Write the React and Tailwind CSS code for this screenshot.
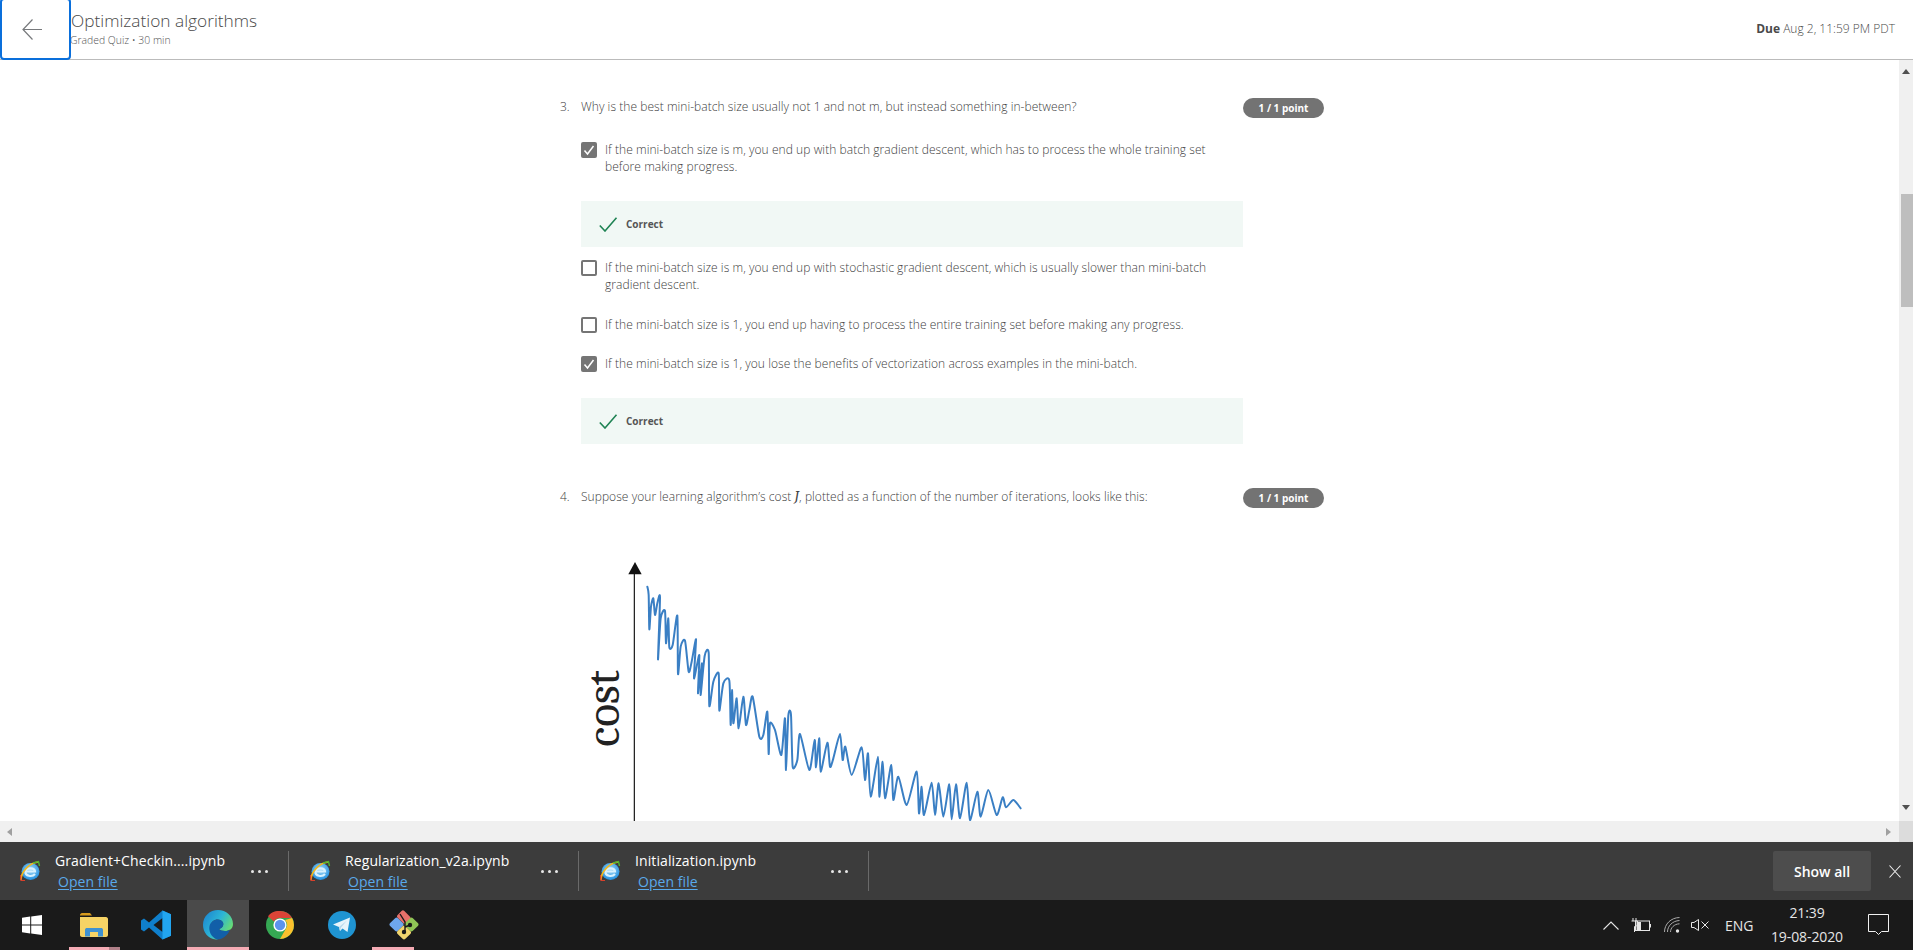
import React from "react";

const pts = "232,110 236,135 238,238 243,170 250,145 255,195 262,160 270,142 264,328 272,205 285,183 288,280 295,205 298,292 308,285 322,197 324,372 332,290 345,272 356,365 365,335 378,268 372,385 388,315 384,430 396,340 392,435 404,318 416,308 418,468 430,395 446,370 448,482 460,400 478,392 482,525 486,420 490,520 500,445 506,535 520,440 528,525 538,480 548,440 568,560 580,555 592,485 596,612 600,520 615,540 634,615 645,505 648,660 655,497 663,495 668,650 682,630 690,552 718,660 734,570 738,652 748,565 752,665 772,578 780,650 790,625 810,552 818,630 826,590 845,675 875,592 885,690 894,610 902,740 924,620 928,740 938,635 945,745 964,645 970,750 985,680 1010,765 1040,665 1047,790 1055,710 1062,795 1085,698 1095,795 1106,700 1120,800 1138,703 1145,808 1158,703 1170,805 1190,698 1200,810 1222,725 1232,800 1255,720 1280,795 1298,742 1308,772 1330,750 1352,775"
  .split(" ")
  .map((p) => p.split(",").map(Number));

function smooth(points) {
  let d = `M${points[0][0]} ${points[0][1]}`;
  const k = 0.12;
  for (let i = 0; i < points.length - 1; i++) {
    const p0 = points[Math.max(i - 1, 0)];
    const p1 = points[i];
    const p2 = points[i + 1];
    const p3 = points[Math.min(i + 2, points.length - 1)];
    d += ` C${p1[0] + (p2[0] - p0[0]) * k} ${p1[1] + (p2[1] - p0[1]) * k} ${p2[0] - (p3[0] - p1[0]) * k} ${p2[1] - (p3[1] - p1[1]) * k} ${p2[0]} ${p2[1]}`;
  }
  return d;
}
const curve = smooth(pts);

function Checkbox({ checked }) {
  if (checked) {
    return (
      <span className="flex h-[16px] w-[16px] shrink-0 items-center justify-center rounded-[2px] bg-[#757575]">
        <svg width="12" height="12" viewBox="0 0 12 12" fill="none">
          <path d="M1.5 6.5 L4.5 10 L10.5 2" stroke="#fff" strokeWidth="1.5" />
        </svg>
      </span>
    );
  }
  return <span className="h-[16px] w-[16px] shrink-0 rounded-[2px] border-2 border-[#757575] bg-white" />;
}

function Option({ checked, className, children }) {
  return (
    <div className={`flex w-[662px] gap-[8px] text-[12px] leading-[17px] ${className}`}>
      <Checkbox checked={checked} />
      <div className="-mt-[1px] pb-[1px] tracking-[0.06px] text-[#404040]">{children}</div>
    </div>
  );
}

function Correct({ className }) {
  return (
    <div className={`flex h-[46px] w-[662px] items-center bg-[#f1f8f5] pl-[18px] ${className}`}>
      <svg width="19" height="15" viewBox="0 0 19 15" fill="none">
        <path d="M0.8 8.5 L6 14 L17.5 0.8" stroke="#1f8354" strokeWidth="1.6" />
      </svg>
      <span className="ml-[8px] text-[10px] font-bold text-[#555]">Correct</span>
    </div>
  );
}

function Question({ n, className, children }) {
  return (
    <div className={`flex h-[20px] ${className}`}>
      <div className="w-[21px] text-[12px] leading-[17px] text-[#404040]">{n}</div>
      <div className="w-[662px] text-[12px] leading-[17px] tracking-[0.05px] text-[#404040]">{children}</div>
      <div className="flex h-[20px] w-[81px] items-center justify-center rounded-full bg-[#737373] text-[10px] font-bold text-white">
        1 / 1 point
      </div>
    </div>
  );
}

function IEIcon({ id }) {
  return (
    <svg width="22" height="22" viewBox="0 0 22 22" className="shrink-0">
      <defs>
        <radialGradient id={id} cx="50%" cy="40%" r="60%">
          <stop offset="0%" stopColor="#a8dcf7" />
          <stop offset="100%" stopColor="#1f8fe0" />
        </radialGradient>
      </defs>
      <ellipse cx="11.5" cy="11.5" rx="9" ry="8.5" fill={`url(#${id})`} />
      <path d="M6 11.5 H16 C16 7.5 7 7 6.5 11.5 C6 16 13 17.5 16 14" fill="none" stroke="#d9f1fd" strokeWidth="2.2" />
      <path d="M2 20 C2 12 10 3 19 2" fill="none" stroke="#f2b81f" strokeWidth="1.6" />
      <path d="M14 3 L19.5 1.5 L20.5 6" fill="none" stroke="#4fb12f" strokeWidth="1.4" />
      <path d="M1.5 15 L2 20.5 L6 20.5" fill="none" stroke="#d8402a" strokeWidth="1.2" />
    </svg>
  );
}

function Download({ name, id }) {
  return (
    <div className="flex h-[40px] w-[290px] shrink-0 items-center border-r border-[#6a6a6a]">
      <div className="ml-[20px]">
        <IEIcon id={id} />
      </div>
      <div className="ml-[14px] w-[196px] text-[14px] leading-[21px] text-white">
        <div className="tracking-[0.1px] whitespace-nowrap">{name}</div>
        <div className="ml-[3px] text-[#5aa9ea] underline underline-offset-2 tracking-[0.05px]">Open file</div>
      </div>
      <div className="flex gap-[4px]">
        <span className="h-[3px] w-[3px] rounded-full bg-[#e8e8e8]" />
        <span className="h-[3px] w-[3px] rounded-full bg-[#e8e8e8]" />
        <span className="h-[3px] w-[3px] rounded-full bg-[#e8e8e8]" />
      </div>
    </div>
  );
}

function TaskSlot({ active, bar, children }) {
  return (
    <div className={`relative flex h-[50px] w-[62px] shrink-0 items-center justify-center ${active ? "bg-[#4a4a4a]" : ""}`}>
      {children}
      {bar}
    </div>
  );
}

const pink = <span className="absolute bottom-0 left-0 h-[3px] w-full bg-[#f4abb4]" />;

export default function App() {
  return (
    <div className="flex h-[950px] w-[1913px] flex-col overflow-hidden bg-white text-[#4a4a4a] [font-family:'Open_Sans',sans-serif]">
      <header className="flex h-[60px] shrink-0 items-start border-b border-[#bbbbbb]">
        <div className="z-10 -mt-[2px] flex h-[62px] w-[71px] shrink-0 items-center justify-center rounded-[4px] border-2 border-[#0a6fdb] bg-white pr-[8px]">
          <svg width="20" height="21" viewBox="0 0 20 21" fill="none">
            <path d="M20 10.5 H1 M10.5 0.5 L1 10.5 L10.5 20.5" stroke="#77797c" strokeWidth="1.2" />
          </svg>
        </div>
        <div className="-ml-[1px] pt-[10px] font-light">
          <div className="pl-[1px] text-[17.3px] leading-[22px] text-[#4a4a4a]">Optimization algorithms</div>
          <div className="mt-[2px] text-[10.4px] leading-[12px] text-[#555]">Graded Quiz • 30 min</div>
        </div>
        <div className="ml-auto mr-[18px] pt-[21px] text-[12px] leading-[16px] font-light">
          <b className="font-bold">Due</b> Aug 2, 11:59 PM PDT
        </div>
      </header>

      <div className="flex h-[761px] shrink-0">
        <main className="h-full flex-1 overflow-hidden pl-[560px] pt-[38px] font-light">
          <Question n="3.">Why is the best mini-batch size usually not 1 and not m, but instead something in-between?</Question>
          <div className="ml-[21px]">
            <Option checked className="mt-[24px]">
              If the mini-batch size is m, you end up with batch gradient descent, which has to process the whole training set
              <br />
              before making progress.
            </Option>
            <Correct className="mt-[25px]" />
            <Option className="mt-[13px]">
              If the mini-batch size is m, you end up with stochastic gradient descent, which is usually slower than mini-batch
              <br />
              gradient descent.
            </Option>
            <Option className="mt-[23px]">
              If the mini-batch size is 1, you end up having to process the entire training set before making any progress.
            </Option>
            <Option checked className="mt-[22px]">
              If the mini-batch size is 1, you lose the benefits of vectorization across examples in the mini-batch.
            </Option>
            <Correct className="mt-[25px]" />
          </div>
          <Question n="4." className="mt-[44px]">
            Suppose your learning algorithm’s cost <i className="font-serif text-[15px] leading-[10px] font-normal italic">J</i>, plotted as a function of the number of iterations, looks like this:
          </Question>
          <svg width="470" height="280" viewBox="0 0 1410 840" className="ml-[10px] mt-[42px] block" fill="none">
            <path d="M193 70 V840" stroke="#111" strokeWidth="3.5" />
            <path d="M175 73 L195 36 L215 73 Z" fill="#111" />
            <text
              transform="translate(147 590) rotate(-90)"
              className="font-serif font-normal"
              fontSize="142"
              fill="#222"
            >
              cost
            </text>
            <path d={curve} stroke="#3a7fc4" strokeWidth="6" strokeLinejoin="round" strokeLinecap="round" />
          </svg>
        </main>
        <aside className="flex h-full w-[14px] shrink-0 flex-col items-end bg-[#f0f0f0]">
          <div className="flex h-[22px] w-full items-center justify-center">
            <span className="h-0 w-0 border-x-[4px] border-b-[5px] border-x-transparent border-b-[#505050]" />
          </div>
          <div className="mt-[112px] h-[113px] w-[12px] bg-[#bebebe]" />
          <div className="mt-auto flex h-[22px] w-full items-center justify-center pb-[6px]">
            <span className="h-0 w-0 border-x-[4px] border-t-[5px] border-x-transparent border-t-[#505050]" />
          </div>
        </aside>
      </div>

      <div className="flex h-[21px] shrink-0 items-center bg-[#f0f0f0]">
        <span className="ml-[7px] h-0 w-0 border-y-[4px] border-r-[5px] border-y-transparent border-r-[#a0a0a0]" />
        <span className="ml-auto mr-[8px] h-0 w-0 border-y-[4px] border-l-[5px] border-y-transparent border-l-[#a0a0a0]" />
        <span className="h-full w-[14px] bg-[#dcdcdc]" />
      </div>

      <div className="flex h-[58px] shrink-0 items-center bg-[#3c3c3c]">
        <div className="-ml-[1px] flex">
          <Download name="Gradient+Checkin....ipynb" id="ie1" />
          <Download name="Regularization_v2a.ipynb" id="ie2" />
          <Download name="Initialization.ipynb" id="ie3" />
        </div>
        <button className="ml-auto flex h-[40px] w-[98px] items-center justify-center rounded-[2px] bg-[#4d4d4d] text-[14px] font-semibold text-white">
          Show all
        </button>
        <svg width="12" height="13" viewBox="0 0 12 13" fill="none" className="ml-[18px] mr-[12px]">
          <path d="M0.5 0.5 L11.5 12.5 M11.5 0.5 L0.5 12.5" stroke="#f0f0f0" strokeWidth="1.1" />
        </svg>
      </div>

      <footer className="flex h-[50px] shrink-0 items-center bg-[#1a1a1a] text-[#e6e6e6]">
        <div className="flex h-full w-[63px] shrink-0 items-center justify-center">
          <svg width="20" height="20" viewBox="0 0 20 20" fill="#fff">
            <path d="M0 2.8 L8.2 1.6 V9.5 H0 Z M9.2 1.5 L20 0 V9.5 H9.2 Z M0 10.5 H8.2 V18.4 L0 17.2 Z M9.2 10.5 H20 V20 L9.2 18.5 Z" />
          </svg>
        </div>
        <TaskSlot bar={<><span className="absolute bottom-0 left-[6px] h-[3px] w-[40px] bg-[#f4abb4]" /><span className="absolute bottom-0 left-[46px] h-[3px] w-[11px] bg-[#b08088]" /></>}>
          <svg width="28" height="24" viewBox="0 0 28 24">
            <path d="M0 2 C0 1 1 0 2 0 H10 L12 2.5 H0 Z" fill="#d89b1d" />
            <path d="M0 4 H26 C27 4 28 5 28 6 V22 C28 23 27 24 26 24 H2 C1 24 0 23 0 22 Z" fill="#f6d365" />
            <path d="M5 23.5 V17 C5 15.5 6 15 7 15 H21 C22 15 23 15.5 23 17 V23.5 H18 V19 H10 V23.5 Z" fill="#3f92d2" />
          </svg>
        </TaskSlot>
        <TaskSlot>
          <svg width="30" height="30" viewBox="0 0 30 30">
            <path d="M21.5 0.5 L30 4.3 V25.7 L21.5 29.5 L8 17.5 L3 21.5 L0 19.5 V10.5 L3 8.5 L8 12.5 Z M21.5 8 L12.5 15 L21.5 22 Z" fill="#0f7fcc" fillRule="evenodd" />
            <path d="M21.5 0.5 L30 4.3 V25.7 L21.5 29.5 Z" fill="#22a5f0" />
          </svg>
        </TaskSlot>
        <TaskSlot active bar={pink}>
          <svg width="30" height="30" viewBox="0 0 30 30">
            <defs>
              <linearGradient id="eg1" x1="0" y1="0" x2="1" y2="0.6">
                <stop offset="0%" stopColor="#1a7fd0" />
                <stop offset="55%" stopColor="#2cb5d6" />
                <stop offset="100%" stopColor="#6ee06a" />
              </linearGradient>
            </defs>
            <path d="M15 0 C23 0 30 6 30 14 C30 19 26 21 22 21 C19 21 16.5 20 16 19 C19.5 18 21 15.5 20 12.5 C18.5 9 13 8.5 10 11 C6.5 14 7 20 11 24 C13 26 15 27 17 27.5 C16 29 14 29.5 13 29.5 C5 29 0 22 0 15 C0 6 7 0 15 0 Z" fill="url(#eg1)" />
            <path d="M10 11 C13 8.5 18.5 9 20 12.5 C21 15.5 19.5 18 16 19 C16.5 20 19 21 22 21 C24 21 26 20.5 27 19.5 C25 25 20 29.5 14 29.5 C8 27 5.5 21 6.5 16 C7 14 8 12.5 10 11 Z" fill="#125fa8" />
          </svg>
        </TaskSlot>
        <TaskSlot>
          <svg width="28" height="28" viewBox="0 0 28 28">
            <circle cx="14" cy="14" r="14" fill="#35a853" />
            <path d="M14 0 A14 14 0 0 1 26.1 7 H14 A7 7 0 0 0 7.9 10.5 L2 5.2 A14 14 0 0 1 14 0 Z" fill="#db4437" />
            <path d="M26.1 7 A14 14 0 0 1 14 28 L20 17.5 A7 7 0 0 0 19 9 Z" fill="#fbc02d" />
            <circle cx="14" cy="14" r="6.6" fill="#fff" />
            <circle cx="14" cy="14" r="5.2" fill="#5c93ee" />
          </svg>
        </TaskSlot>
        <TaskSlot>
          <svg width="28" height="28" viewBox="0 0 28 28">
            <circle cx="14" cy="14" r="14" fill="#1f94d2" />
            <path d="M5 13.5 L22 6.5 L19.5 21 L14.5 17.5 L12 20 L11 16 Z" fill="#e8f4fb" />
            <path d="M11 16 L19 9.5 L13 16.5 L12 20 Z" fill="#b9d9ec" />
          </svg>
        </TaskSlot>
        <TaskSlot bar={<span className="absolute bottom-0 left-[-1px] h-[3px] w-[42px] bg-[#f4abb4]" />}>
          <svg width="30" height="30" viewBox="0 0 30 30">
            <rect x="10" y="1" width="9.5" height="12" rx="2" transform="rotate(-45 15 7)" fill="#e8706a" />
            <rect x="2" y="9" width="11" height="11" rx="2" transform="rotate(45 7.5 14.5)" fill="#6ea6ec" />
            <rect x="17" y="9" width="11" height="11" rx="2" transform="rotate(45 22.5 14.5)" fill="#8fc556" />
            <rect x="9.5" y="17" width="11" height="11" rx="2" transform="rotate(45 15 22.5)" fill="#f1d56e" />
            <path d="M11 4 L16 12 V23" stroke="#1a1a1a" strokeWidth="1.4" fill="none" />
            <circle cx="15" cy="22" r="2.2" fill="#1a1a1a" />
            <circle cx="21" cy="15" r="2.2" fill="#1a1a1a" />
            <path d="M16 17 L21 15" stroke="#1a1a1a" strokeWidth="1.4" />
          </svg>
        </TaskSlot>

        <div className="ml-auto flex h-full items-center">
          <svg width="16" height="9" viewBox="0 0 16 9" fill="none">
            <path d="M0.5 8.5 L8 1 L15.5 8.5" stroke="#e6e6e6" strokeWidth="1.1" />
          </svg>
          <svg width="20" height="14" viewBox="0 0 20 14" fill="none" className="ml-[12px]">
            <path d="M2 0 V3 M5 0 V3 M0.5 3 H6.5 V6 C6.5 8 5 8.5 3.5 8.5 V14" stroke="#e6e6e6" strokeWidth="1" />
            <rect x="4.5" y="3" width="14" height="9.5" stroke="#e6e6e6" strokeWidth="1" />
            <rect x="5.5" y="4" width="4.5" height="8" fill="#e6e6e6" />
            <rect x="18.5" y="6" width="1.5" height="3.5" fill="#e6e6e6" />
          </svg>
          <svg width="16" height="16" viewBox="0 0 16 16" fill="none" className="ml-[13px]">
            <path d="M0.5 15 C0.5 7 7 0.7 15.5 0.5 M3.5 15 C3.5 9 8.5 3.8 15.5 3.5 M6.5 15 C6.5 11 10 7 15.5 6.8" stroke="#aaaaaa" strokeWidth="1" />
            <circle cx="13.5" cy="14" r="1.7" fill="#e6e6e6" />
          </svg>
          <svg width="18" height="12" viewBox="0 0 18 12" fill="none" className="ml-[11px]">
            <path d="M0.5 3.5 H3 L7.5 0.5 V11.5 L3 8.5 H0.5 Z" stroke="#e6e6e6" strokeWidth="1" />
            <path d="M10.5 2.5 L17.5 9.5 M17.5 2.5 L10.5 9.5" stroke="#e6e6e6" strokeWidth="1" />
          </svg>
          <span className="ml-[16px] w-[30px] text-[14px]">ENG</span>
          <div className="ml-[11px] w-[82px] text-center text-[14px] leading-[24px] tracking-[-0.1px]">
            <div>21:39</div>
            <div>19-08-2020</div>
          </div>
          <svg width="21" height="22" viewBox="0 0 21 22" fill="none" className="ml-[20px] mr-[24px]">
            <path d="M0.5 0.5 H20.5 V17.5 H13.5 L10.5 20.5 L7.5 17.5 H0.5 Z" stroke="#f0f0f0" strokeWidth="1" />
          </svg>
        </div>
      </footer>
    </div>
  );
}
